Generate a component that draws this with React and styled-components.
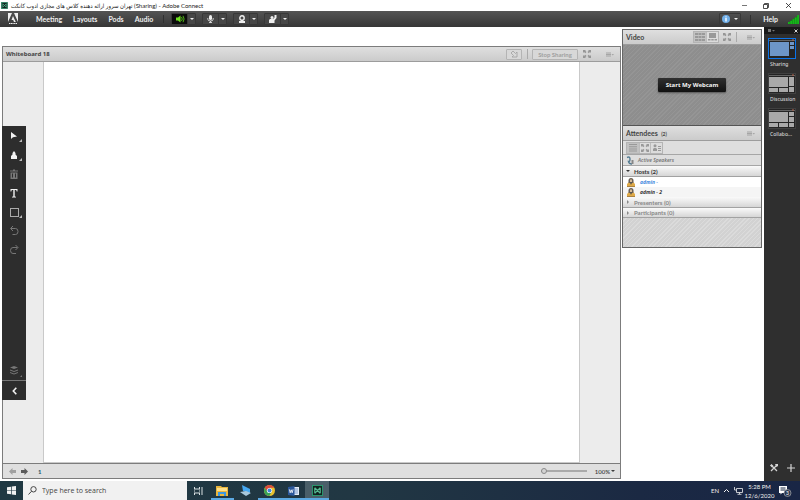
import React from "react";
import styled, { createGlobalStyle, css } from "styled-components";

const Global = createGlobalStyle`
  * { box-sizing: border-box; }
  html, body { margin: 0; background: #fff; }
  body { font-family: "Lato", "Noto Sans", sans-serif; font-size: 6px; color: #3c3c3c; }
  button { font: inherit; color: inherit; border: 0; background: none; padding: 0; margin: 0; }
  ul, h2, h3 { margin: 0; padding: 0; list-style: none; font-size: inherit; }
  svg { display: block; flex: none; }
`;

const Page = styled.div`
  display: flex;
  flex-direction: column;
  min-height: 100vh;
`;

/* ---------- window title ---------- */
const TitleBar = styled.header`
  display: flex;
  align-items: center;
  height: 11px;
  padding: 0 1px;
  gap: 3px;
  color: #222;
`;
const AppTitle = styled.span`
  flex: 1;
  font-family: "Lato", "DejaVu Sans Condensed", "DejaVu Sans", sans-serif;
  font-size: 6px;
  line-height: 11px;
  white-space: nowrap;
`;
const WindowButtons = styled.div`
  display: flex;
`;
const WindowButton = styled.button`
  display: grid;
  place-items: center;
  width: 22px;
  height: 10px;
`;

/* ---------- menu bar ---------- */
const MenuBar = styled.nav`
  display: flex;
  align-items: center;
  height: 16px;
  padding: 0 1px 0 7px;
  background: linear-gradient(#545454, #363636);
  color: #efefef;
  font-size: 7px;
  font-weight: 700;
`;
const MenuItems = styled.div`
  display: flex;
  gap: 11px;
  margin-left: 17px;
  padding-right: 10px;
  border-right: 1px solid #303030;
`;
const DeviceGroup = styled.div`
  display: flex;
  gap: 6px;
  margin-left: 7px;
  flex: 1;
`;
const Device = styled.div`
  display: flex;
  border: 1px solid #383838;
  border-radius: 1px;
  background: #474747;
`;
const DeviceButton = styled.button`
  display: grid;
  place-items: center;
  width: ${(p) => (p.$arrow ? "8px" : "15px")};
  height: 10px;
  background: ${(p) => (p.$on ? "#0b0b0b" : "transparent")};
  border-left: ${(p) => (p.$arrow ? "1px solid #383838" : "0")};
`;
const InfoButton = styled.button`
  display: flex;
  align-items: center;
  justify-content: center;
  gap: 4px;
  width: 22px;
  height: 12px;
  border: 1px solid #383838;
  border-radius: 1px;
`;
const MenuDivider = styled.span`
  width: 1px;
  height: 9px;
  margin: 0 12px 0 9px;
  background: #303030;
`;
const Signal = styled.span`
  margin-left: 10px;
`;

/* ---------- work area ---------- */
const Work = styled.main`
  display: flex;
  flex: 1;
`;
const Stage = styled.div`
  display: flex;
  flex: 1;
  padding: 19px 0 2px 2px;
`;
const Pod = styled.section`
  display: flex;
  flex-direction: column;
  flex: 1;
  border: 1px solid #7c7c7c;
`;
const PodHeader = styled.header`
  display: flex;
  align-items: center;
  height: ${(p) => (p.$tall ? "16px" : "15px")};
  padding: 0 6px 0 3px;
  border-bottom: 1px solid #9c9c9c;
  background: linear-gradient(#dfdfdf, #cbcbcb);
  color: #444;
`;
const PodTitle = styled.h2`
  flex: 1;
  font-size: ${(p) => (p.$wide ? "6px" : "7px")};
  font-family: ${(p) => (p.$wide ? '"Noto Sans"' : '"Lato"')}, sans-serif;
  font-weight: 700;
  white-space: pre;
`;
const Count = styled.small`
  font-size: 5px;
`;
const HeaderTools = styled.div`
  display: flex;
  align-items: center;
  color: #969696;
`;
const OutlineButton = styled.button`
  display: grid;
  place-items: center;
  height: 11px;
  width: ${(p) => (p.$text ? "46px" : "16px")};
  border: 1px solid #b4b4b4;
  border-radius: 1px;
  background: #d8d8d8;
  color: #a0a0a0;
  font-weight: 700;
`;
const ToolSplit = styled.span`
  width: 1px;
  height: 10px;
  margin: 0 ${(p) => p.$right}px 0 5px;
  background: #aaa;
`;
const IconButton = styled.button`
  display: grid;
  place-items: center;
  width: 8px;
  height: 10px;
  margin-left: ${(p) => p.$gap || 0}px;
`;
const Board = styled.div`
  display: flex;
  flex: 1;
  background: #ececec;
`;
const Gutter = styled.div`
  width: 40px;
  padding-top: 64px;
`;
const Canvas = styled.div`
  flex: 1;
  background: #fff;
  border: solid #c9c9c9;
  border-width: 0 1px 1px;
`;
const Palette = styled.div`
  display: flex;
  flex-direction: column;
  width: 24px;
  margin-left: -1px;
  height: 274px;
  background: #2d2d2d;
  color: #f2f2f2;
`;
const Tool = styled.button`
  display: grid;
  place-items: center;
  width: 24px;
  height: 19px;
  color: ${(p) => (p.$dim ? "#777" : "#f2f2f2")};
  ${(p) => p.$last && css`margin-top: auto; height: 18px;`}
`;
const Collapse = styled.button`
  display: grid;
  place-items: center;
  height: 20px;
  border-top: 1px solid #777;
`;
const PodFooter = styled.footer`
  display: flex;
  align-items: center;
  height: 15px;
  padding: 0 5px 0 5px;
  border-top: 1px solid #7c7c7c;
  background: #dfdfdf;
`;
const PageNumber = styled.span`
  flex: 1;
  margin-left: 10px;
  color: #1d5668;
  font-weight: 700;
`;
const Zoom = styled.input`
  appearance: none;
  width: 46px;
  height: 8px;
  margin: 0 8px 0 0;
  background: linear-gradient(#aaa, #aaa) center / 100% 2px no-repeat;
  &::-webkit-slider-thumb {
    appearance: none;
    width: 6px;
    height: 6px;
    border: 1px solid #8a8a8a;
    border-radius: 50%;
    background: #d4d4d4;
  }
`;
const ZoomLevel = styled.button`
  display: flex;
  align-items: center;
  gap: 1px;
  font-weight: 600;
`;

/* ---------- video and attendees ---------- */
const SideColumn = styled.aside`
  display: flex;
  flex-direction: column;
  width: 140px;
  margin: 2px 2px 0 1px;
`;
const SidePods = styled.div`
  border: 1px solid #666;
`;
const hatch = (a, b) => css`
  background: repeating-linear-gradient(135deg, ${a} 0 2px, ${b} 2px 3px);
`;
const VideoStage = styled.div`
  display: grid;
  place-items: center;
  height: 80px;
  ${hatch("#8e8e8e", "#959595")}
`;
const WebcamButton = styled.button`
  width: 68px;
  height: 14px;
  border-radius: 1px;
  background: linear-gradient(#303030, #111);
  box-shadow: 0 1px 2px #555;
  color: #f4f4f4;
  font-family: "Noto Sans", sans-serif;
  font-weight: 700;
  font-size: 6px;
`;
const Segments = styled.div`
  display: flex;
  border: 1px solid #b4b4b4;
  color: #999;
`;
const Segment = styled.button`
  display: grid;
  place-items: center;
  width: ${(p) => p.$w || 12}px;
  height: 10px;
  background: ${(p) => (p.$on ? "#c2c2c2" : "#dcdcdc")};
  & + & { border-left: 1px solid #bcbcbc; }
`;
const AttendeesHeader = styled(PodHeader)`
  border-top: 1px solid #555;
`;
const ViewBar = styled.div`
  display: flex;
  align-items: center;
  height: 14px;
  padding-left: 3px;
  background: #dedede;
  border-bottom: 1px solid #a6a6a6;
`;
const Speakers = styled.div`
  display: flex;
  align-items: center;
  gap: 3px;
  height: 11px;
  padding-left: 3px;
  background: #dedede;
  border-bottom: 1px solid #a6a6a6;
  color: #777;
  font-family: "Noto Sans", sans-serif;
  font-size: 5px;
  font-style: italic;
  font-weight: 600;
`;
const GroupButton = styled.button`
  display: flex;
  align-items: center;
  gap: 4px;
  width: 100%;
  height: ${(p) => (p.$tall ? "11px" : "10px")};
  padding-left: 3px;
  background: linear-gradient(#fafafa, #d6d6d6);
  border-bottom: 1px solid #a2a2a2;
  color: ${(p) => (p.$open ? "#333" : "#888")};
  font-size: 6px;
  font-weight: 700;
`;
const Person = styled.li`
  display: flex;
  align-items: center;
  gap: 5px;
  height: 10px;
  padding-left: 4px;
  background: ${(p) => (p.$self ? "#fff" : "#f5f5f5")};
  color: ${(p) => (p.$self ? "#4388dd" : "#333")};
  font-family: "Noto Sans", sans-serif;
  font-size: 5px;
  font-style: italic;
  font-weight: 700;
`;
const Rest = styled.div`
  height: 29px;
  ${hatch("#d2d2d2", "#dbdbdb")}
`;

/* ---------- layouts rail ---------- */
const Rail = styled.aside`
  display: flex;
  flex-direction: column;
  width: 36px;
  background: #2f2f2f;
  color: #d4d4d4;
`;
const RailHeader = styled.div`
  display: flex;
  justify-content: space-between;
  align-items: center;
  height: 7px;
  padding: 0 2px 0 4px;
  background: #191919;
`;
const LayoutList = styled.div`
  display: flex;
  flex-direction: column;
  gap: 4px;
  padding: 4px 4px 0;
`;
const LayoutButton = styled.button`
  display: flex;
  flex-direction: column;
  gap: 1px;
  height: 31px;
  font-family: "Noto Sans", sans-serif;
  font-size: 5px;
  line-height: 8px;
  text-align: left;
  white-space: nowrap;
  font-weight: 500;
`;
const LayoutLabel = styled.span`
  padding-left: 2px;
`;
const RailFooter = styled.div`
  display: flex;
  justify-content: space-between;
  margin-top: auto;
  padding: 0 5px 9px 6px;
`;

/* ---------- taskbar ---------- */
const TaskBar = styled.footer`
  display: flex;
  height: 19px;
  background: linear-gradient(90deg, #1f3842, #213743 45%, #1b2943 80%, #192645);
  color: #f0f0f0;
`;
const StartButton = styled.button`
  display: grid;
  place-items: center;
  width: 23px;
`;
const SearchBox = styled.label`
  display: flex;
  align-items: center;
  gap: 5px;
  width: 164px;
  padding-left: 5px;
  background: #f1f1f1;
  color: #444;
`;
const SearchInput = styled.input`
  width: 100%;
  border: 0;
  padding: 0;
  background: transparent;
  font: 7px "Open Sans", sans-serif;
  &::placeholder { color: #444; opacity: 1; }
`;
const Apps = styled.div`
  display: grid;
  grid-template-columns: repeat(6, 1fr);
  width: 142px;
`;
const AppButton = styled.button`
  display: grid;
  place-items: center;
  height: 19px;
  padding-top: 2px;
  background: ${(p) => (p.$active ? "#4a5f69" : "transparent")};
  border-bottom: 2px solid ${(p) => (p.$open ? "#5ca9e2" : "transparent")};
  background-clip: padding-box;
`;
const Tray = styled.div`
  display: flex;
  align-items: center;
  margin-left: auto;
  padding-right: 8px;
  gap: 4px;
`;
const Clock = styled.time`
  width: 25px;
  display: flex;
  flex-direction: column;
  align-items: center;
  line-height: 9px;
  white-space: nowrap;
  font-size: 6px;
`;
const Notices = styled.button`
  margin-left: 3px;
`;

/* ---------- drawings ---------- */
const Svg = ({ w, h, children, vb }) => (
  <svg width={w} height={h} viewBox={vb || `0 0 ${w} ${h}`} fill="currentColor" aria-hidden="true">
    {children}
  </svg>
);
const Caret = ({ w = 4 }) => (
  <Svg w={w} h={w / 2} vb="0 0 4 2"><path d="M0 0h4L2 2z" /></Svg>
);
const PodMenu = () => (
  <Svg w={8} h={5}><path d="M0 .5h5v1H0zM0 2h5v1H0zM0 3.500h5v1H0zM5.500 2h2.500l-1.200 1.500z" opacity=".75" /></Svg>
);
const Expand = () => (
  <Svg w={8} h={8}>
    <path d="M0 0h3L2.200.8l1.300 1.300-1.200 1.200L1 2 0 3zM8 0v3L7 2 5.700 3.300 4.500 2.100 5.800.8 5 0zM0 8V5l1 1 1.300-1.300 1.200 1.200L2.200 7.200 3 8zM8 8H5l.8-.8-1.300-1.300 1.200-1.200L7 6l1-1z" />
  </Svg>
);
const Corner = () => <path d="M20 15v-3l-3 3z" fill="#bbb" />;
const ToolSvg = ({ children, corner }) => (
  <Svg w={24} h={18}>{children}{corner && <Corner />}</Svg>
);
const Host = () => (
  <Svg w={8} h={9}>
    <path d="M0 8V6l2-2h4l2 2v2z" fill="#dfaa48" />
    <path d="M1.500 2.500q0-2.500 2.500-2.500t2.500 2.500v2.500h-5z" fill="#6b6055" />
    <path d="M3 1.500h2v2.500H3z" fill="#d6bb98" />
    <path d="M3 4.500h2L4 7z" fill="#3d4450" />
    <path d="M0 8h8v1H0z" fill="#a98243" />
  </Svg>
);
const Thumb = ({ kind }) => {
  const on = kind === "sharing";
  const fill = on ? "#6d96c8" : "#a9a9a9";
  return (
    <Svg w={28} h={21}>
      <rect width="28" height="21" fill={on ? "#0b73e8" : "#404040"} />
      <rect x="1" y="1" width="26" height="19" fill="#242424" />
      <path d="M1 2h26v1H1z" fill="#646464" />
      <path d="M24 1.500h2v1h-2z" fill="#b8674c" />
      {on && <path d="M2 4h19v14H2zM22 4h4v3h-4zM22 8h4v3h-4z" fill={fill} />}
      {kind === "discussion" && <path d="M1 4h19v10H1zM21 4h5v9h-5zM21 14h5v5h-5zM1 15h9v4H1zM11 15h9v4h-9z" fill={fill} />}
      {kind === "collab" && <path d="M1 4h19v10H1zM21 4h5v4h-5zM21 9h5v5h-5zM1 15h9v4H1zM11 15h9v4h-9zM21 15h5v4h-5z" fill={fill} />}
    </Svg>
  );
};

const devices = [
  { name: "Speakers", on: true, art: <Svg w={10} h={8}><path d="M1 2.500h2L5.500.500v7L3 5.500H1z" fill="#6fe021" /><path d="M6.500 2q1.500 2 0 4M8 .8q2.200 3.200 0 6.400" fill="none" stroke="#4fb018" /></Svg> },
  { name: "Microphone", art: <Svg w={7} h={8}><rect x="2" width="3" height="5" rx="1.500" /><path d="M.8 3v1.200q0 1.800 2.700 1.800t2.700-1.800V3M3.500 6v1.500M2 7.500h3" fill="none" stroke="currentColor" strokeWidth=".8" /></Svg> },
  { name: "Webcam", art: <Svg w={8} h={8}><circle cx="4" cy="3" r="2.200" fill="none" stroke="currentColor" strokeWidth="1.400" /><path d="M3 5h2v1h2v2H1V6h2z" /></Svg> },
  { name: "Raise hand", art: <Svg w={8} h={8}><circle cx="3" cy="2.500" r="1.500" /><path d="M0 8V5l1-1h3l1.500-1.500V0h2v3L5.500 5.500V8z" /></Svg> },
];

const tools = [
  { name: "Select", corner: true, art: <path d="M9 5v7l2-1.700 4-.8z" /> },
  { name: "Marker", corner: true, art: <path d="M12 5l-1.500 2v1.500L9 10v3h6v-3l-1.500-1.500V7z" /> },
  { name: "Delete", dim: true, art: <path d="M11 4.500h2v1h3v1H8v-1h3zM8.500 7.500h7V14h-7zm1.500 1v4h1V8.500zm3 0v4h1V8.500z" fillRule="evenodd" /> },
  { name: "Text", art: <path d="M8.500 5h7v2.500h-.8l-.5-1.500h-1.500v6.500l1.300.3v.7h-4v-.7l1.300-.3V6H9.800l-.5 1.500h-.8z" /> },
  { name: "Shapes", corner: true, art: <rect x="8.500" y="5.500" width="8" height="8" fill="none" stroke="#aaa" /> },
  { name: "Undo", dim: true, art: <path d="M11 4L8.500 6.500 11 9M9 6.500h4.500q2.500 0 2.500 3t-2.500 3h-3" fill="none" stroke="currentColor" /> },
  { name: "Redo", dim: true, art: <path d="M13.500 4L16 6.500 13.500 9M15.500 6.500H11q-2.500 0-2.500 3t2.500 3h3" fill="none" stroke="currentColor" /> },
];

const ConnectLogo = ({ size }) => (
  <Svg w={size} h={size} vb="0 0 12 12">
    <rect x=".5" y=".5" width="11" height="11" fill="#10231f" stroke="#2a9b70" />
    <path d="M3 3l6 6M9 3L3 9M3 3v6M9 3v6" fill="none" stroke="#55b890" strokeWidth="1.200" />
  </Svg>
);

const taskApps = [
  { name: "Task view", art: <Svg w={9} h={8}><path d="M0 0h1v1.500h4V0h1v2.500H0zM0 8V5.500h6V8H5V6.500H1V8zM0 3.500h1v1H0zM5 3.500h1v1H5zM7.500 0h1v3h-1zM7 3.500h2v1H7zM7.500 5h1v3h-1z" fill="#d8dfe2" /></Svg> },
  { name: "File Explorer", open: true, art: <Svg w={12} h={10}><path d="M0 0h5l1 1h6v9H0z" fill="#e9b63d" /><path d="M1 2h10v3H1z" fill="#ffe08a" /><path d="M2 10V6h8v4H8V8H4v2z" fill="#3b97e0" /></Svg> },
  { name: "Remote Desktop", art: <Svg w={12} h={11}><path d="M2 0l8 4v4L3 6z" fill="#45a8f2" /><path d="M0 7l6-1 5 2-5 3z" fill="#a9c8dc" /></Svg> },
  { name: "Chrome", open: true, art: <Svg w={11} h={11}><circle cx="5.500" cy="5.500" r="5.500" fill="#e9c02e" /><path d="M.8 2.700A5.500 5.500 0 0110.300 2.800H5.500L3.300 6.800z" fill="#dc4a3c" /><path d="M.8 2.700A5.500 5.500 0 005.300 11L7.500 7 3.300 6.800z" fill="#3aa457" /><circle cx="5.500" cy="5.500" r="2.600" fill="#fff" /><circle cx="5.500" cy="5.500" r="2" fill="#4285dc" /></Svg> },
  { name: "Word", open: true, art: <Svg w={11} h={10}><path d="M5 1h6v8H5z" fill="#e4ebf6" /><path d="M6 3h4M6 5h4M6 7h4" stroke="#557fbd" strokeWidth=".7" /><path d="M0 1l6.500-1v10L0 9z" fill="#2b579a" /><path d="M1.300 3.300l.9 3.500 1-3 1 3 .9-3.500" fill="none" stroke="#fff" strokeWidth=".8" /></Svg> },
  { name: "Adobe Connect", open: true, active: true, art: <ConnectLogo size={11} /> },
];

export default function App() {
  return (
    <Page>
      <Global />
      <TitleBar>
        <ConnectLogo size={7} />
        <AppTitle>تهران سرور ارائه دهنده کلاس های مجازی ادوب کانکت (Sharing) - Adobe Connect</AppTitle>
        <WindowButtons>
          <WindowButton aria-label="Minimize"><Svg w={5} h={1}><path d="M0 0h5v1H0z" fill="#777" /></Svg></WindowButton>
          <WindowButton aria-label="Restore"><Svg w={6} h={6}><path d="M.5 1.500h4v4h-4zM1.500 1.500v-1h4v4h-1" fill="none" stroke="currentColor" strokeWidth=".8" /></Svg></WindowButton>
          <WindowButton aria-label="Close"><Svg w={5} h={5}><path d="M0 0l5 5M5 0L0 5" stroke="currentColor" strokeWidth=".8" /></Svg></WindowButton>
        </WindowButtons>
      </TitleBar>

      <MenuBar>
        <Svg w={12} h={12}>
          <path d="M1 0h4L1 9zM11 0H7l4 9zM6 3l2.800 6H7L6.200 7H4.500z" />
          <path d="M2 10.500h8" stroke="currentColor" strokeDasharray="1.300 .4" />
        </Svg>
        <MenuItems>
          {["Meeting", "Layouts", "Pods", "Audio"].map((m) => <button key={m}>{m}</button>)}
        </MenuItems>
        <DeviceGroup>
          {devices.map((d) => (
            <Device key={d.name}>
              <DeviceButton $on={d.on} aria-label={d.name}>{d.art}</DeviceButton>
              <DeviceButton $arrow aria-label={`${d.name} options`}><Caret /></DeviceButton>
            </Device>
          ))}
        </DeviceGroup>
        <InfoButton aria-label="Information">
          <Svg w={8} h={8}><circle cx="4" cy="4" r="4" fill="#6faee8" /><path d="M3.500 1.300h1v1.200h-1zM3.300 3h1.400v3.500H3.300z" fill="#fff" /></Svg>
          <Caret w={4} />
        </InfoButton>
        <MenuDivider />
        <button>Help</button>
        <Signal><Svg w={11} h={9}><path d="M0 7.500L11 0v9H0z" fill="#0f8a14" /><path d="M0 7h1.700v2H0zM2.300 6H4v3H2.300zM4.600 4.300h1.700V9H4.600zM6.900 2.500h1.700V9H6.900zM9.200 0H11v9H9.200z" fill="#18b41b" /></Svg></Signal>
      </MenuBar>

      <Work>
        <Stage>
          <Pod>
            <PodHeader>
              <PodTitle $wide>Whiteboard 18</PodTitle>
              <HeaderTools>
                <OutlineButton aria-label="Pointer"><Svg w={8} h={8}><path d="M1 3l2-2 2.500 2.500L7 2v5H2l1.500-1.500z" fill="none" stroke="currentColor" strokeWidth=".8" /></Svg></OutlineButton>
                <ToolSplit $right={4} />
                <OutlineButton $text>Stop Sharing</OutlineButton>
                <IconButton $gap={5} aria-label="Full screen"><Expand /></IconButton>
                <IconButton $gap={15} aria-label="Pod options"><PodMenu /></IconButton>
              </HeaderTools>
            </PodHeader>
            <Board>
              <Gutter>
                <Palette>
                  {tools.map((t) => (
                    <Tool key={t.name} $dim={t.dim} aria-label={t.name}><ToolSvg corner={t.corner}>{t.art}</ToolSvg></Tool>
                  ))}
                  <Tool $dim $last aria-label="Arrange">
                    <ToolSvg><path d="M12 4l4 1.500L12 7 8 5.500zM8 7.500L12 9l4-1.500v1L12 10 8 8.500zM8 10l4 1.500L16 10v1l-4 1.500L8 11zM20 15v-2l-2 2z" /></ToolSvg>
                  </Tool>
                  <Collapse aria-label="Collapse tools"><Svg w={5} h={8}><path d="M4.300.800L1.300 4l3 3.200" fill="none" stroke="currentColor" strokeWidth="1.600" /></Svg></Collapse>
                </Palette>
              </Gutter>
              <Canvas />
              <Gutter />
            </Board>
            <PodFooter>
              <IconButton aria-label="Previous page"><Svg w={7} h={7}><path d="M0 3.500L3.500 0v2H7v3H3.500v2z" fill="#a0a0a0" /></Svg></IconButton>
              <IconButton $gap={4} aria-label="Next page"><Svg w={7} h={7}><path d="M7 3.500L3.500 0v2H0v3h3.500v2z" fill="#5a5a5a" /></Svg></IconButton>
              <PageNumber>1</PageNumber>
              <Zoom type="range" min="0" max="100" defaultValue="0" aria-label="Zoom" />
              <ZoomLevel>100% <Caret w={4} /></ZoomLevel>
            </PodFooter>
          </Pod>
        </Stage>

        <SideColumn>
          <SidePods>
            <PodHeader>
              <PodTitle>Video</PodTitle>
              <HeaderTools>
                <Segments>
                  <Segment $on aria-label="Grid"><Svg w={10} h={8}><path d="M0 0h3v2H0zM3.500 0h3v2h-3zM7 0h3v2H7zM0 3h3v2H0zM3.500 3h3v2h-3zM7 3h3v2H7zM0 6h3v2H0zM3.500 6h3v2h-3zM7 6h3v2H7z" /></Svg></Segment>
                  <Segment aria-label="Filmstrip"><Svg w={9} h={8}><path d="M1 0h7v5H1zM0 6h2.500v1.500H0zM3.300 6h2.400v1.500H3.300zM6.500 6H9v1.500H6.500z" /></Svg></Segment>
                </Segments>
                <IconButton $gap={4} aria-label="Full screen"><Expand /></IconButton>
                <ToolSplit $right={8} />
                <IconButton $gap={2} aria-label="Video options"><PodMenu /></IconButton>
              </HeaderTools>
            </PodHeader>
            <VideoStage><WebcamButton>Start My Webcam</WebcamButton></VideoStage>
            <AttendeesHeader $tall>
              <PodTitle>Attendees  <Count>(2)</Count></PodTitle>
              <HeaderTools><IconButton aria-label="Attendees options"><PodMenu /></IconButton></HeaderTools>
            </AttendeesHeader>
            <ViewBar>
              <Segments>
                <Segment $on aria-label="List view"><Svg w={8} h={8}><path d="M0 0h8v1H0zM0 2.200h8v1H0zM0 4.400h8v1H0zM0 6.600h8v1H0z" /></Svg></Segment>
                <Segment $w={11} aria-label="Breakout view"><Expand /></Segment>
                <Segment aria-label="Status view"><Svg w={8} h={7}><circle cx="2" cy="1.800" r="1.500" /><path d="M0 7V5l1-1h2l1 1v2zM5 2h3v1H5zM5 4h3v1H5zM5 6h3v1H5z" /></Svg></Segment>
              </Segments>
            </ViewBar>
            <Speakers>
              <Svg w={9} h={9}><path d="M1 1.500q3-1.500 3 1.500T2.500 5.500Q3 8 6 8" fill="none" stroke="#547c92" strokeWidth="1.400" /><path d="M5.500 4h2v4h-2z" fill="#888" /></Svg>
              Active Speakers
            </Speakers>
            <h3><GroupButton $open $tall aria-expanded="true"><Caret w={4} />Hosts (2)</GroupButton></h3>
            <ul>
              <Person $self><Host />admin -</Person>
              <Person><Host />admin - 2</Person>
            </ul>
            <h3><GroupButton $tall aria-expanded="false"><Svg w={4} h={4}><path d="M1 0l2 2-2 2z" /></Svg>Presenters (0)</GroupButton></h3>
            <h3><GroupButton aria-expanded="false"><Svg w={4} h={4}><path d="M1 0l2 2-2 2z" /></Svg>Participants (0)</GroupButton></h3>
            <Rest />
          </SidePods>
        </SideColumn>

        <Rail>
          <RailHeader>
            <button aria-label="Layout options"><Svg w={7} h={4}><path d="M0 0h3v3H0zM4 1h3L5.500 2.500z" fill="#777" /></Svg></button>
            <button aria-label="Close layouts"><Svg w={4} h={4}><path d="M.5.500l3 3M3.500.500l-3 3" stroke="currentColor" /></Svg></button>
          </RailHeader>
          <LayoutList>
            <LayoutButton><Thumb kind="sharing" /><LayoutLabel>Sharing</LayoutLabel></LayoutButton>
            <LayoutButton><Thumb kind="discussion" /><LayoutLabel>Discussion</LayoutLabel></LayoutButton>
            <LayoutButton><Thumb kind="collab" /><LayoutLabel>Collabo...</LayoutLabel></LayoutButton>
          </LayoutList>
          <RailFooter>
            <button aria-label="Manage layouts"><Svg w={8} h={8}><path d="M1 1l6 6M7 1L1 7" stroke="currentColor" strokeWidth="1.300" /><path d="M0 1.500L1.500 0l2 2L2 3.500zM5 0h3v2L6.500 3z" /></Svg></button>
            <button aria-label="Add layout"><Svg w={8} h={8}><path d="M3.400 0h1.200v3.400H8v1.200H4.600V8H3.400V4.600H0V3.400h3.400z" /></Svg></button>
          </RailFooter>
        </Rail>
      </Work>

      <TaskBar>
        <StartButton aria-label="Start"><Svg w={9} h={9}><path d="M0 1.300l4-.6v3.500H0zM4.700.6L9 0v4.200H4.700zM0 4.800h4v3.500l-4-.6zM4.700 4.800H9V9l-4.300-.6z" /></Svg></StartButton>
        <SearchBox>
          <Svg w={9} h={9}><circle cx="5.500" cy="3.300" r="2.700" fill="none" stroke="currentColor" /><path d="M3.500 5.300L.5 8.500" stroke="currentColor" /></Svg>
          <SearchInput type="text" aria-label="Search" placeholder="Type here to search" />
        </SearchBox>
        <Apps>
          {taskApps.map((a) => <AppButton key={a.name} $open={a.open} $active={a.active} aria-label={a.name}>{a.art}</AppButton>)}
        </Apps>
        <Tray>
          <span>EN</span>
          <Svg w={7} h={5}><path d="M1 4l2.500-2.500L6 4" fill="none" stroke="currentColor" /></Svg>
          <Svg w={9} h={8}><path d="M2.500 1.500h6v4h-6zM.5 0v3h2M5.500 5.500V7M3.500 7.300h4" fill="none" stroke="currentColor" strokeWidth=".8" /></Svg>
          <Clock><span>5:28 PM</span><span>12/6/2020</span></Clock>
          <Notices aria-label="Notifications, 3 new">
            <Svg w={13} h={12}>
              <path d="M0 1h8v7H3L1.500 9.500V8H0z" fill="#fff" />
              <path d="M1.500 3h5M1.500 5h5" stroke="#1b2943" />
              <circle cx="8.500" cy="8" r="3.500" fill="#283650" stroke="#aaa" strokeWidth=".7" />
              <text x="8.500" y="10" fontSize="5" textAnchor="middle" fill="#fff">3</text>
            </Svg>
          </Notices>
        </Tray>
      </TaskBar>
    </Page>
  );
}
